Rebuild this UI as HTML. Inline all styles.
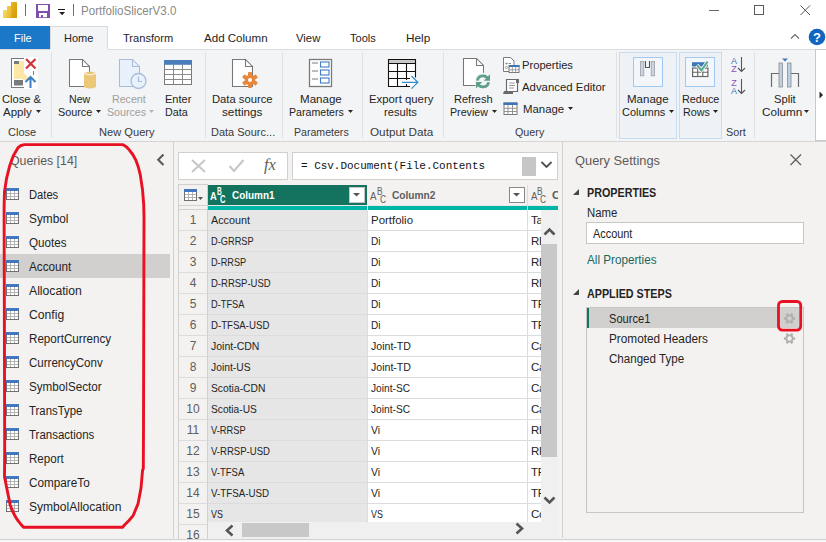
<!DOCTYPE html><html><head><meta charset="utf-8"><style>html,body{margin:0;padding:0;width:826px;height:542px;overflow:hidden;position:relative;background:#fff;}body{font-family:'Liberation Sans', sans-serif;}</style></head><body><div style="position:absolute;left:0px;top:0px;width:826px;height:49px;box-sizing:border-box;background:#ffffff;"></div>
<svg style="position:absolute;left:2px;top:1px;" width="18" height="19" viewBox="0 0 18 19"><defs><linearGradient id="lg1" x1="0" y1="0" x2="1" y2="1"><stop offset="0" stop-color="#f6dc6a"/><stop offset="1" stop-color="#ecc53c"/></linearGradient><linearGradient id="lg2" x1="0" y1="0" x2="1" y2="1"><stop offset="0" stop-color="#f2cf48"/><stop offset="1" stop-color="#e4b324"/></linearGradient><linearGradient id="lg3" x1="0" y1="0" x2="1" y2="1"><stop offset="0" stop-color="#e8b51c"/><stop offset="1" stop-color="#d4960a"/></linearGradient></defs><rect x="1" y="9" width="6" height="8" rx="0.6" fill="url(#lg1)"/><rect x="5" y="5" width="6" height="12" rx="0.6" fill="url(#lg2)"/><rect x="9" y="1" width="6" height="16" rx="0.6" fill="url(#lg3)"/></svg>
<div style="position:absolute;left:25px;top:4px;width:1px;height:12px;box-sizing:border-box;background:#6e6e6e;"></div>
<svg style="position:absolute;left:35px;top:3px;" width="16" height="16" viewBox="0 0 16 16"><rect x="1" y="1" width="14" height="14" fill="#7f4fae"/><path d="M3 2 H13 V7.2 Q13 8 12.2 8 H3.8 Q3 8 3 7.2 Z" fill="#ffffff"/><rect x="4" y="10" width="8" height="4.2" fill="#ffffff"/><rect x="6" y="12" width="2" height="2.2" fill="#7f4fae"/></svg>
<svg style="position:absolute;left:57px;top:7px;" width="10" height="10" viewBox="0 0 10 10"><rect x="1" y="2" width="7" height="1" fill="#1b1b1b"/><path d="M2.2 5 H8 L5.1 8.2 Z" fill="#1b1b1b"/></svg>
<div style="position:absolute;left:73px;top:4px;width:1px;height:12px;box-sizing:border-box;background:#6e6e6e;"></div>
<div style="position:absolute;top:4.04px;font-size:12px;line-height:15px;color:#8a8886;font-weight:400;white-space:nowrap;font-family:'Liberation Sans', sans-serif;left:81.10px;transform:scaleX(0.9663);transform-origin:0 50%;">PortfolioSlicerV3.0</div>
<div style="position:absolute;left:709px;top:10px;width:10px;height:1px;box-sizing:border-box;background:#6a6a6a;"></div>
<div style="position:absolute;left:754px;top:5px;width:10px;height:10px;box-sizing:border-box;border:1px solid #5a5a5a;"></div>
<svg style="position:absolute;left:799px;top:4px;" width="13" height="13" viewBox="0 0 13 13"><path d="M1.5 1.5 L11 11 M11 1.5 L1.5 11" stroke="#555" stroke-width="1"/></svg>
<div style="position:absolute;left:0px;top:26px;width:50px;height:23px;box-sizing:border-box;background:#1b77c8;"></div>
<div style="position:absolute;top:31.02px;font-size:11.5px;line-height:14px;color:#ffffff;font-weight:400;white-space:nowrap;font-family:'Liberation Sans', sans-serif;left:13.60px;transform:scaleX(0.9540);transform-origin:0 50%;">File</div>
<div style="position:absolute;left:50px;top:26px;width:58px;height:24px;box-sizing:border-box;background:#f3f4f6;border:1px solid #dadbdc;border-bottom:none;"></div>
<div style="position:absolute;top:31.02px;font-size:11.5px;line-height:14px;color:#252423;font-weight:400;white-space:nowrap;font-family:'Liberation Sans', sans-serif;left:64.20px;transform:scaleX(0.9577);transform-origin:0 50%;">Home</div>
<div style="position:absolute;top:31.02px;font-size:11.5px;line-height:14px;color:#252423;font-weight:400;white-space:nowrap;font-family:'Liberation Sans', sans-serif;left:122.90px;transform:scaleX(0.9652);transform-origin:0 50%;">Transform</div>
<div style="position:absolute;top:31.02px;font-size:11.5px;line-height:14px;color:#252423;font-weight:400;white-space:nowrap;font-family:'Liberation Sans', sans-serif;left:203.50px;transform:scaleX(1.0050);transform-origin:0 50%;">Add Column</div>
<div style="position:absolute;top:31.02px;font-size:11.5px;line-height:14px;color:#252423;font-weight:400;white-space:nowrap;font-family:'Liberation Sans', sans-serif;left:296.00px;transform:scaleX(0.9837);transform-origin:0 50%;">View</div>
<div style="position:absolute;top:31.02px;font-size:11.5px;line-height:14px;color:#252423;font-weight:400;white-space:nowrap;font-family:'Liberation Sans', sans-serif;left:350.00px;transform:scaleX(0.9595);transform-origin:0 50%;">Tools</div>
<div style="position:absolute;top:31.02px;font-size:11.5px;line-height:14px;color:#252423;font-weight:400;white-space:nowrap;font-family:'Liberation Sans', sans-serif;left:406.20px;transform:scaleX(1.0234);transform-origin:0 50%;">Help</div>
<svg style="position:absolute;left:790px;top:32px;" width="11" height="8" viewBox="0 0 11 8"><path d="M1 6.5 L5 2.5 L9 6.5" fill="none" stroke="#6b6b6b" stroke-width="1.2"/></svg>
<svg style="position:absolute;left:808px;top:28px;" width="18" height="18" viewBox="0 0 18 18"><circle cx="9" cy="9" r="8.3" fill="#1065c0"/><text x="9" y="13.6" font-family="Liberation Sans" font-weight="700" font-size="13" fill="#fff" text-anchor="middle">?</text></svg>
<div style="position:absolute;left:0px;top:49px;width:826px;height:93px;box-sizing:border-box;background:#f3f4f6;"></div>
<div style="position:absolute;left:0px;top:49px;width:50px;height:1px;box-sizing:border-box;background:#dadbdc;"></div>
<div style="position:absolute;left:108px;top:49px;width:718px;height:1px;box-sizing:border-box;background:#dadbdc;"></div>
<div style="position:absolute;left:0px;top:141px;width:826px;height:1px;box-sizing:border-box;background:#d6d6d6;"></div>
<div style="position:absolute;left:51px;top:52px;width:1px;height:86px;box-sizing:border-box;background:#e1e1e1;"></div>
<div style="position:absolute;left:205px;top:52px;width:1px;height:86px;box-sizing:border-box;background:#e1e1e1;"></div>
<div style="position:absolute;left:282px;top:52px;width:1px;height:86px;box-sizing:border-box;background:#e1e1e1;"></div>
<div style="position:absolute;left:362px;top:52px;width:1px;height:86px;box-sizing:border-box;background:#e1e1e1;"></div>
<div style="position:absolute;left:443px;top:52px;width:1px;height:86px;box-sizing:border-box;background:#e1e1e1;"></div>
<div style="position:absolute;left:616px;top:52px;width:1px;height:86px;box-sizing:border-box;background:#e1e1e1;"></div>
<div style="position:absolute;left:754px;top:52px;width:1px;height:86px;box-sizing:border-box;background:#e1e1e1;"></div>
<div style="position:absolute;left:815px;top:49px;width:11px;height:92px;box-sizing:border-box;background:#ffffff;border:1px solid #c9c9c9;border-right:none;"></div>
<svg style="position:absolute;left:819px;top:91px;" width="5" height="8" viewBox="0 0 5 8"><path d="M0.5 0.5 L4 4 L0.5 7.5 Z" fill="#252423"/></svg>
<svg style="position:absolute;left:10px;top:57px;" width="28" height="32" viewBox="0 0 28 32"><rect x="1.5" y="1.5" width="21" height="29" fill="#ffffff" stroke="#7a7a7a" stroke-width="1"/><rect x="14" y="0" width="14" height="32" fill="#ffffff"/><path d="M4 4 H14 V16 L21 23 H13 V22 H4 Z" fill="#fde7a6"/><rect x="4" y="4" width="5" height="3" fill="#7a7a7a"/><rect x="4" y="23" width="9" height="5.5" fill="#7a7a7a"/><path d="M16 2 L25.5 11.5 M25.5 2 L16 11.5" stroke="#d13438" stroke-width="2.2"/><path d="M20.5 31 V20 M15.5 25 L20.5 20 L25.5 25" fill="none" stroke="#3d7fc0" stroke-width="2"/><rect x="23" y="14" width="1" height="4" fill="#7a7a7a"/></svg>
<div style="position:absolute;top:92.02px;font-size:11.5px;line-height:14px;color:#252423;font-weight:400;white-space:nowrap;font-family:'Liberation Sans', sans-serif;left:2.30px;transform:scaleX(0.9681);transform-origin:0 50%;">Close &amp;</div>
<div style="position:absolute;top:105.02px;font-size:11.5px;line-height:14px;color:#252423;font-weight:400;white-space:nowrap;font-family:'Liberation Sans', sans-serif;left:2.90px;transform:scaleX(1.0029);transform-origin:0 50%;">Apply</div>
<svg style="position:absolute;left:35.5px;top:110.3px;" width="6" height="4" viewBox="0 0 6 4"><path d="M0 0 H5 L2.5 3 Z" fill="#252423"/></svg>
<div style="position:absolute;top:125.02px;font-size:11.5px;line-height:14px;color:#3b3a39;font-weight:400;white-space:nowrap;font-family:'Liberation Sans', sans-serif;left:8.10px;transform:scaleX(0.9584);transform-origin:0 50%;">Close</div>
<svg style="position:absolute;left:68px;top:58px;" width="30" height="32" viewBox="0 0 30 32"><path d="M1.5 1.5 H14.5 L21.5 8.5 V28.5 H1.5 Z" fill="#ffffff" stroke="#777" stroke-width="1.05"/><path d="M14.5 1.5 V8.5 H21.5" fill="none" stroke="#777" stroke-width="1.05"/><path d="M16 15 Q22 12 28 15 V29 Q22 32 16 29 Z" fill="#ecc778"/><path d="M16 15.5 Q22 18.5 28 15.5" fill="none" stroke="#ffffff" stroke-width="0.9"/></svg>
<div style="position:absolute;top:92.02px;font-size:11.5px;line-height:14px;color:#252423;font-weight:400;white-space:nowrap;font-family:'Liberation Sans', sans-serif;left:68.80px;transform:scaleX(0.9198);transform-origin:0 50%;">New</div>
<div style="position:absolute;top:105.02px;font-size:11.5px;line-height:14px;color:#252423;font-weight:400;white-space:nowrap;font-family:'Liberation Sans', sans-serif;left:58.30px;transform:scaleX(0.9406);transform-origin:0 50%;">Source</div>
<svg style="position:absolute;left:96.2px;top:110.3px;" width="6" height="4" viewBox="0 0 6 4"><path d="M0 0 H5 L2.5 3 Z" fill="#252423"/></svg>
<svg style="position:absolute;left:118px;top:58px;" width="30" height="32" viewBox="0 0 30 32"><path d="M1.5 1.5 H14.5 L21.5 8.5 V28.5 H1.5 Z" fill="#e9f1fc" stroke="#a9bcd9" stroke-width="1.05"/><path d="M14.5 1.5 V8.5 H21.5" fill="none" stroke="#a9bcd9" stroke-width="1.05"/><circle cx="20.5" cy="23" r="7.5" fill="#e9f1fc" stroke="#a9bcd9" stroke-width="1.3"/><path d="M20.5 18.5 V23.5 H24" fill="none" stroke="#a9bcd9" stroke-width="1.2"/></svg>
<div style="position:absolute;top:92.02px;font-size:11.5px;line-height:14px;color:#a19f9d;font-weight:400;white-space:nowrap;font-family:'Liberation Sans', sans-serif;left:112.30px;transform:scaleX(0.9264);transform-origin:0 50%;">Recent</div>
<div style="position:absolute;top:105.02px;font-size:11.5px;line-height:14px;color:#a19f9d;font-weight:400;white-space:nowrap;font-family:'Liberation Sans', sans-serif;left:106.50px;transform:scaleX(0.9237);transform-origin:0 50%;">Sources</div>
<svg style="position:absolute;left:149px;top:110.3px;" width="6" height="4" viewBox="0 0 6 4"><path d="M0 0 H5 L2.5 3 Z" fill="#b3b3b3"/></svg>
<svg style="position:absolute;left:163px;top:59px;" width="30" height="27" viewBox="0 0 30 27"><rect x="1.5" y="1.5" width="27" height="24" fill="#ffffff" stroke="#7a7a7a" stroke-width="1"/><rect x="1" y="1" width="28" height="4.8" fill="#4a7ebb"/><path d="M10.5 5.5 V25.5 M19.5 5.5 V25.5 M1.5 10.5 H28.5 M1.5 15.5 H28.5 M1.5 20.5 H28.5" stroke="#8a8a8a" stroke-width="1"/></svg>
<div style="position:absolute;top:92.02px;font-size:11.5px;line-height:14px;color:#252423;font-weight:400;white-space:nowrap;font-family:'Liberation Sans', sans-serif;left:164.60px;transform:scaleX(0.9582);transform-origin:0 50%;">Enter</div>
<div style="position:absolute;top:105.02px;font-size:11.5px;line-height:14px;color:#252423;font-weight:400;white-space:nowrap;font-family:'Liberation Sans', sans-serif;left:165.30px;transform:scaleX(0.9319);transform-origin:0 50%;">Data</div>
<div style="position:absolute;top:125.02px;font-size:11.5px;line-height:14px;color:#3b3a39;font-weight:400;white-space:nowrap;font-family:'Liberation Sans', sans-serif;left:99.20px;transform:scaleX(0.9660);transform-origin:0 50%;">New Query</div>
<svg style="position:absolute;left:231px;top:58px;" width="30" height="32" viewBox="0 0 30 32"><path d="M1.5 1.5 H14.5 L21.5 8.5 V28.5 H1.5 Z" fill="#ffffff" stroke="#777" stroke-width="1.05"/><path d="M14.5 1.5 V8.5 H21.5" fill="none" stroke="#777" stroke-width="1.05"/><g transform="translate(19,22)" fill="#e8873a"><circle r="5.2"/><rect x="-2" y="-8" width="4" height="4" rx="1" transform="rotate(0)"/><rect x="-2" y="-8" width="4" height="4" rx="1" transform="rotate(60)"/><rect x="-2" y="-8" width="4" height="4" rx="1" transform="rotate(120)"/><rect x="-2" y="-8" width="4" height="4" rx="1" transform="rotate(180)"/><rect x="-2" y="-8" width="4" height="4" rx="1" transform="rotate(240)"/><rect x="-2" y="-8" width="4" height="4" rx="1" transform="rotate(300)"/><circle r="2" fill="#ffffff"/></g></svg>
<div style="position:absolute;top:92.02px;font-size:11.5px;line-height:14px;color:#252423;font-weight:400;white-space:nowrap;font-family:'Liberation Sans', sans-serif;left:212.40px;transform:scaleX(0.9772);transform-origin:0 50%;">Data source</div>
<div style="position:absolute;top:105.02px;font-size:11.5px;line-height:14px;color:#252423;font-weight:400;white-space:nowrap;font-family:'Liberation Sans', sans-serif;left:222.30px;transform:scaleX(1.0205);transform-origin:0 50%;">settings</div>
<div style="position:absolute;top:125.02px;font-size:11.5px;line-height:14px;color:#3b3a39;font-weight:400;white-space:nowrap;font-family:'Liberation Sans', sans-serif;left:210.50px;transform:scaleX(0.9564);transform-origin:0 50%;">Data Sourc...</div>
<svg style="position:absolute;left:308px;top:58px;" width="26" height="30" viewBox="0 0 26 30"><rect x="1.5" y="1.5" width="22" height="27" fill="#ffffff" stroke="#7a7a7a" stroke-width="1.3"/><path d="M4 5 H10 M4 13 H10 M4 21 H10" stroke="#7a7a7a" stroke-width="1"/><rect x="12.5" y="4" width="8.5" height="5" fill="none" stroke="#3e7cc0" stroke-width="1.1"/><rect x="12.5" y="12" width="8.5" height="5" fill="none" stroke="#3e7cc0" stroke-width="1.1"/><rect x="12.5" y="20" width="8.5" height="5" fill="none" stroke="#3e7cc0" stroke-width="1.1"/></svg>
<div style="position:absolute;top:92.02px;font-size:11.5px;line-height:14px;color:#252423;font-weight:400;white-space:nowrap;font-family:'Liberation Sans', sans-serif;left:300.20px;transform:scaleX(1.0058);transform-origin:0 50%;">Manage</div>
<div style="position:absolute;top:105.02px;font-size:11.5px;line-height:14px;color:#252423;font-weight:400;white-space:nowrap;font-family:'Liberation Sans', sans-serif;left:289.40px;transform:scaleX(0.9231);transform-origin:0 50%;">Parameters</div>
<svg style="position:absolute;left:347.9px;top:110.3px;" width="6" height="4" viewBox="0 0 6 4"><path d="M0 0 H5 L2.5 3 Z" fill="#252423"/></svg>
<div style="position:absolute;top:125.02px;font-size:11.5px;line-height:14px;color:#3b3a39;font-weight:400;white-space:nowrap;font-family:'Liberation Sans', sans-serif;left:293.50px;transform:scaleX(0.9198);transform-origin:0 50%;">Parameters</div>
<svg style="position:absolute;left:387px;top:58px;" width="34" height="32" viewBox="0 0 34 32"><rect x="1.5" y="1.5" width="27" height="27" fill="#ffffff"/><rect x="2" y="2" width="26" height="3" fill="#c8c8c8"/><path d="M1.5 1 V28.5 M1 1.5 H29 M28.5 1 V19.5 M1 5.5 H29 M1 13.5 H29 M1 20.5 H23 M1 28.5 H23 M10.5 5 V29 M19.5 5 V22 M19.5 26 V29" fill="none" stroke="#111" stroke-width="1.1"/><path d="M15 24.3 H30.5 M24.5 18 L30.8 24.3 L24.5 30.6" fill="none" stroke="#2e8bd0" stroke-width="1.2"/></svg>
<div style="position:absolute;top:92.02px;font-size:11.5px;line-height:14px;color:#252423;font-weight:400;white-space:nowrap;font-family:'Liberation Sans', sans-serif;left:369.30px;transform:scaleX(0.9870);transform-origin:0 50%;">Export query</div>
<div style="position:absolute;top:105.02px;font-size:11.5px;line-height:14px;color:#252423;font-weight:400;white-space:nowrap;font-family:'Liberation Sans', sans-serif;left:384.40px;transform:scaleX(0.9701);transform-origin:0 50%;">results</div>
<div style="position:absolute;top:125.02px;font-size:11.5px;line-height:14px;color:#3b3a39;font-weight:400;white-space:nowrap;font-family:'Liberation Sans', sans-serif;left:369.60px;transform:scaleX(1.0190);transform-origin:0 50%;">Output Data</div>
<svg style="position:absolute;left:462px;top:57px;" width="30" height="32" viewBox="0 0 30 32"><path d="M1.5 1.5 H14.5 L21.5 8.5 V28.5 H1.5 Z" fill="#ffffff" stroke="#777" stroke-width="1.05"/><path d="M14.5 1.5 V8.5 H21.5" fill="none" stroke="#777" stroke-width="1.05"/><circle cx="21" cy="24.4" r="8.6" fill="#f3f4f6"/><path d="M12.7 15.5 V28.5 H12.7" stroke="none"/><path d="M15.4 23.6 A5.6 5.6 0 0 1 26.2 22.6" fill="none" stroke="#5d9e88" stroke-width="2.7"/><path d="M26.6 25.2 A5.6 5.6 0 0 1 15.8 26.2" fill="none" stroke="#5d9e88" stroke-width="2.7"/><path d="M28 17.3 V23.8 H21.8 Z" fill="#5d9e88"/><path d="M14 31.5 V25 H20.2 Z" fill="#5d9e88"/></svg>
<div style="position:absolute;top:92.02px;font-size:11.5px;line-height:14px;color:#252423;font-weight:400;white-space:nowrap;font-family:'Liberation Sans', sans-serif;left:454.40px;transform:scaleX(0.9581);transform-origin:0 50%;">Refresh</div>
<div style="position:absolute;top:105.02px;font-size:11.5px;line-height:14px;color:#252423;font-weight:400;white-space:nowrap;font-family:'Liberation Sans', sans-serif;left:450.20px;transform:scaleX(0.9280);transform-origin:0 50%;">Preview</div>
<svg style="position:absolute;left:492px;top:110.3px;" width="6" height="4" viewBox="0 0 6 4"><path d="M0 0 H5 L2.5 3 Z" fill="#252423"/></svg>
<svg style="position:absolute;left:502px;top:56px;" width="18" height="18" viewBox="0 0 18 18"><path d="M1.5 1.5 H8.5 L12 5 V15.5 H1.5 Z" fill="#ffffff" stroke="#7a7a7a" stroke-width="1"/><circle cx="4.5" cy="7.5" r="1.1" fill="#8a8a8a"/><circle cx="4.5" cy="11.5" r="1.1" fill="none" stroke="#8a8a8a" stroke-width="0.8"/><path d="M6.5 7.5 H9" stroke="#8a8a8a" stroke-width="1"/><rect x="7" y="9.5" width="10" height="7" fill="#ffffff" stroke="#7a7a7a" stroke-width="1"/><rect x="7" y="9" width="10.5" height="2" fill="#3e74b8"/><path d="M10.3 11 V16.5 M13.6 11 V16.5 M7 13.8 H17" stroke="#8a8a8a" stroke-width="0.8"/></svg>
<div style="position:absolute;top:58.02px;font-size:11.5px;line-height:14px;color:#252423;font-weight:400;white-space:nowrap;font-family:'Liberation Sans', sans-serif;left:522.30px;transform:scaleX(0.9722);transform-origin:0 50%;">Properties</div>
<svg style="position:absolute;left:502px;top:78px;" width="18" height="17" viewBox="0 0 18 17"><path d="M4.5 1.5 H15.5 V13.5 H4.5 Z" fill="#ffffff" stroke="#6a6a6a" stroke-width="1.2"/><rect x="14" y="1" width="3" height="4" fill="#6a6a6a"/><path d="M7 5 H13 M7 7.5 H13 M7 10 H12" stroke="#8a8a8a" stroke-width="0.9"/><path d="M1 16 L2 13 H11 V16 Z" fill="#6a6a6a"/></svg>
<div style="position:absolute;top:80.02px;font-size:11.5px;line-height:14px;color:#252423;font-weight:400;white-space:nowrap;font-family:'Liberation Sans', sans-serif;left:522.30px;transform:scaleX(0.9899);transform-origin:0 50%;">Advanced Editor</div>
<svg style="position:absolute;left:503px;top:102px;" width="15" height="13" viewBox="0 0 15 13"><rect x="1" y="1" width="13" height="11.5" fill="#ffffff" stroke="#7a7a7a" stroke-width="1"/><rect x="0.5" y="0.5" width="14" height="2.5" fill="#3e74b8"/><path d="M5 3 V12.5 M9.5 3 V12.5 M1 6.3 H14 M1 9.5 H14" stroke="#8a8a8a" stroke-width="0.9"/></svg>
<div style="position:absolute;top:102.02px;font-size:11.5px;line-height:14px;color:#252423;font-weight:400;white-space:nowrap;font-family:'Liberation Sans', sans-serif;left:522.50px;transform:scaleX(0.9912);transform-origin:0 50%;">Manage</div>
<svg style="position:absolute;left:568.2px;top:106.7px;" width="6" height="4" viewBox="0 0 6 4"><path d="M0 0 H5 L2.5 3 Z" fill="#252423"/></svg>
<div style="position:absolute;top:125.02px;font-size:11.5px;line-height:14px;color:#3b3a39;font-weight:400;white-space:nowrap;font-family:'Liberation Sans', sans-serif;left:514.50px;transform:scaleX(0.9345);transform-origin:0 50%;">Query</div>
<div style="position:absolute;left:619px;top:52px;width:58px;height:87px;box-sizing:border-box;background:#eef2f7;border:1px solid #c7dcf3;"></div>
<div style="position:absolute;left:633px;top:57px;width:30px;height:30px;box-sizing:border-box;background:#f3f6fa;border:1px solid #9fc8f2;"></div>
<svg style="position:absolute;left:636px;top:58px;" width="24" height="24" viewBox="0 0 24 24"><rect x="4.4" y="3.4" width="3.4" height="14.4" fill="#c5d5e6" stroke="#a0a0a0" stroke-width="0.8"/><rect x="15.2" y="3.4" width="3.4" height="14.4" fill="#c5d5e6" stroke="#a0a0a0" stroke-width="0.8"/><path d="M9.5 3 V9.5 H13.5 V3" fill="none" stroke="#555" stroke-width="1.1"/></svg>
<div style="position:absolute;top:92.02px;font-size:11.5px;line-height:14px;color:#252423;font-weight:400;white-space:nowrap;font-family:'Liberation Sans', sans-serif;left:626.60px;transform:scaleX(1.0009);transform-origin:0 50%;">Manage</div>
<div style="position:absolute;top:105.02px;font-size:11.5px;line-height:14px;color:#252423;font-weight:400;white-space:nowrap;font-family:'Liberation Sans', sans-serif;left:621.80px;transform:scaleX(0.9556);transform-origin:0 50%;">Columns</div>
<svg style="position:absolute;left:668.9px;top:110.3px;" width="6" height="4" viewBox="0 0 6 4"><path d="M0 0 H5 L2.5 3 Z" fill="#252423"/></svg>
<div style="position:absolute;left:679px;top:52px;width:43px;height:87px;box-sizing:border-box;background:#eef2f7;border:1px solid #c7dcf3;"></div>
<div style="position:absolute;left:685px;top:57px;width:30px;height:30px;box-sizing:border-box;background:#f3f6fa;border:1px solid #9fc8f2;"></div>
<svg style="position:absolute;left:688px;top:58px;" width="24" height="22" viewBox="0 0 24 22"><rect x="4" y="4.2" width="16" height="4.3" fill="#3e74b8"/><rect x="4.6" y="10.1" width="15.3" height="8.4" fill="#fff" stroke="#666" stroke-width="1.2"/><path d="M9.7 10 V18.5 M14.8 10 V18.5 M4.5 14.3 H20" stroke="#666" stroke-width="1.1"/><path d="M9 7 L13.4 12.3 L19.6 3.6" fill="none" stroke="#f3f6fa" stroke-width="3.6"/><path d="M9 7 L13.4 12.3 L19.6 3.6" fill="none" stroke="#5aa88f" stroke-width="2"/></svg>
<div style="position:absolute;top:92.02px;font-size:11.5px;line-height:14px;color:#252423;font-weight:400;white-space:nowrap;font-family:'Liberation Sans', sans-serif;left:681.60px;transform:scaleX(0.9429);transform-origin:0 50%;">Reduce</div>
<div style="position:absolute;top:105.02px;font-size:11.5px;line-height:14px;color:#252423;font-weight:400;white-space:nowrap;font-family:'Liberation Sans', sans-serif;left:682.80px;transform:scaleX(0.9343);transform-origin:0 50%;">Rows</div>
<svg style="position:absolute;left:713px;top:110.3px;" width="6" height="4" viewBox="0 0 6 4"><path d="M0 0 H5 L2.5 3 Z" fill="#252423"/></svg>
<svg style="position:absolute;left:729px;top:56px;" width="18" height="40" viewBox="0 0 18 40"><text x="5" y="8" font-family="Liberation Sans" font-size="9" fill="#3e74b8" text-anchor="middle">A</text><text x="5" y="15.5" font-family="Liberation Sans" font-size="9" fill="#8a4fb5" text-anchor="middle">Z</text><text x="5" y="30" font-family="Liberation Sans" font-size="9" fill="#8a4fb5" text-anchor="middle">Z</text><text x="5" y="38" font-family="Liberation Sans" font-size="9" fill="#3e74b8" text-anchor="middle">A</text><path d="M12.5 1 V15.5 M9 12 L12.5 15.5 L16 12 M12.5 23 V37.5 M9 34 L12.5 37.5 L16 34" fill="none" stroke="#555" stroke-width="1.1"/></svg>
<div style="position:absolute;top:125.02px;font-size:11.5px;line-height:14px;color:#3b3a39;font-weight:400;white-space:nowrap;font-family:'Liberation Sans', sans-serif;left:726.40px;transform:scaleX(0.9408);transform-origin:0 50%;">Sort</div>
<svg style="position:absolute;left:770px;top:58px;" width="30" height="30" viewBox="0 0 30 30"><path d="M1.5 29 V15.5 H9 M21 15.5 H28.5 V29" fill="none" stroke="#6a6a6a" stroke-width="1.2"/><rect x="9" y="5" width="3.5" height="24" fill="#bcd0e6" stroke="#8a8a8a" stroke-width="0.8"/><rect x="17.5" y="5" width="3.5" height="24" fill="#bcd0e6" stroke="#8a8a8a" stroke-width="0.8"/><path d="M12 0.5 H18 L15 3.5 Z" fill="#3e74b8"/></svg>
<div style="position:absolute;top:92.02px;font-size:11.5px;line-height:14px;color:#252423;font-weight:400;white-space:nowrap;font-family:'Liberation Sans', sans-serif;left:773.60px;transform:scaleX(0.9708);transform-origin:0 50%;">Split</div>
<div style="position:absolute;top:105.02px;font-size:11.5px;line-height:14px;color:#252423;font-weight:400;white-space:nowrap;font-family:'Liberation Sans', sans-serif;left:761.50px;transform:scaleX(1.0171);transform-origin:0 50%;">Column</div>
<svg style="position:absolute;left:804px;top:110.3px;" width="6" height="4" viewBox="0 0 6 4"><path d="M0 0 H5 L2.5 3 Z" fill="#252423"/></svg>
<div style="position:absolute;left:0px;top:142px;width:826px;height:400px;box-sizing:border-box;background:#f3f2f1;"></div>
<div style="position:absolute;left:0px;top:539px;width:826px;height:1px;box-sizing:border-box;background:#d2d0ce;"></div>
<div style="position:absolute;left:0px;top:540px;width:826px;height:2px;box-sizing:border-box;background:#f8f8f8;"></div>
<div style="position:absolute;top:151.82px;font-size:13.5px;line-height:17px;color:#5c5a58;font-weight:400;white-space:nowrap;font-family:'Liberation Sans', sans-serif;left:10.30px;transform:scaleX(0.9136);transform-origin:0 50%;">Queries [14]</div>
<svg style="position:absolute;left:155px;top:153px;" width="10" height="13" viewBox="0 0 10 13"><path d="M8.5 1.5 L3.2 6.8 L8.5 12" fill="none" stroke="#5a5a5a" stroke-width="2.1"/></svg>
<div style="position:absolute;left:0px;top:254px;width:170px;height:24px;box-sizing:border-box;background:#d2d0ce;"></div>
<svg style="position:absolute;left:6px;top:188px;" width="13" height="12" viewBox="0 0 13 12"><g shape-rendering="crispEdges"><rect x="0" y="0" width="13" height="12" fill="#707070"/><rect x="0" y="0" width="13" height="3" fill="#4277bd"/><rect x="1" y="3" width="11" height="8" fill="#b4b4b4"/><rect x="1" y="3" width="3" height="2" fill="#ffffff"/><rect x="1" y="6" width="3" height="2" fill="#ffffff"/><rect x="1" y="9" width="3" height="2" fill="#ffffff"/><rect x="5" y="3" width="3" height="2" fill="#ffffff"/><rect x="5" y="6" width="3" height="2" fill="#ffffff"/><rect x="5" y="9" width="3" height="2" fill="#ffffff"/><rect x="9" y="3" width="3" height="2" fill="#ffffff"/><rect x="9" y="6" width="3" height="2" fill="#ffffff"/><rect x="9" y="9" width="3" height="2" fill="#ffffff"/></g></svg>
<div style="position:absolute;top:188.34px;font-size:12px;line-height:15px;color:#252423;font-weight:400;white-space:nowrap;font-family:'Liberation Sans', sans-serif;left:29.40px;transform:scaleX(0.9315);transform-origin:0 50%;">Dates</div>
<svg style="position:absolute;left:6px;top:212px;" width="13" height="12" viewBox="0 0 13 12"><g shape-rendering="crispEdges"><rect x="0" y="0" width="13" height="12" fill="#707070"/><rect x="0" y="0" width="13" height="3" fill="#4277bd"/><rect x="1" y="3" width="11" height="8" fill="#b4b4b4"/><rect x="1" y="3" width="3" height="2" fill="#ffffff"/><rect x="1" y="6" width="3" height="2" fill="#ffffff"/><rect x="1" y="9" width="3" height="2" fill="#ffffff"/><rect x="5" y="3" width="3" height="2" fill="#ffffff"/><rect x="5" y="6" width="3" height="2" fill="#ffffff"/><rect x="5" y="9" width="3" height="2" fill="#ffffff"/><rect x="9" y="3" width="3" height="2" fill="#ffffff"/><rect x="9" y="6" width="3" height="2" fill="#ffffff"/><rect x="9" y="9" width="3" height="2" fill="#ffffff"/></g></svg>
<div style="position:absolute;top:212.34px;font-size:12px;line-height:15px;color:#252423;font-weight:400;white-space:nowrap;font-family:'Liberation Sans', sans-serif;left:29.40px;transform:scaleX(0.9861);transform-origin:0 50%;">Symbol</div>
<svg style="position:absolute;left:6px;top:236px;" width="13" height="12" viewBox="0 0 13 12"><g shape-rendering="crispEdges"><rect x="0" y="0" width="13" height="12" fill="#707070"/><rect x="0" y="0" width="13" height="3" fill="#4277bd"/><rect x="1" y="3" width="11" height="8" fill="#b4b4b4"/><rect x="1" y="3" width="3" height="2" fill="#ffffff"/><rect x="1" y="6" width="3" height="2" fill="#ffffff"/><rect x="1" y="9" width="3" height="2" fill="#ffffff"/><rect x="5" y="3" width="3" height="2" fill="#ffffff"/><rect x="5" y="6" width="3" height="2" fill="#ffffff"/><rect x="5" y="9" width="3" height="2" fill="#ffffff"/><rect x="9" y="3" width="3" height="2" fill="#ffffff"/><rect x="9" y="6" width="3" height="2" fill="#ffffff"/><rect x="9" y="9" width="3" height="2" fill="#ffffff"/></g></svg>
<div style="position:absolute;top:236.34px;font-size:12px;line-height:15px;color:#252423;font-weight:400;white-space:nowrap;font-family:'Liberation Sans', sans-serif;left:29.40px;transform:scaleX(0.9693);transform-origin:0 50%;">Quotes</div>
<svg style="position:absolute;left:6px;top:260px;" width="13" height="12" viewBox="0 0 13 12"><g shape-rendering="crispEdges"><rect x="0" y="0" width="13" height="12" fill="#707070"/><rect x="0" y="0" width="13" height="3" fill="#4277bd"/><rect x="1" y="3" width="11" height="8" fill="#b4b4b4"/><rect x="1" y="3" width="3" height="2" fill="#ffffff"/><rect x="1" y="6" width="3" height="2" fill="#ffffff"/><rect x="1" y="9" width="3" height="2" fill="#ffffff"/><rect x="5" y="3" width="3" height="2" fill="#ffffff"/><rect x="5" y="6" width="3" height="2" fill="#ffffff"/><rect x="5" y="9" width="3" height="2" fill="#ffffff"/><rect x="9" y="3" width="3" height="2" fill="#ffffff"/><rect x="9" y="6" width="3" height="2" fill="#ffffff"/><rect x="9" y="9" width="3" height="2" fill="#ffffff"/></g></svg>
<div style="position:absolute;top:260.34px;font-size:12px;line-height:15px;color:#252423;font-weight:400;white-space:nowrap;font-family:'Liberation Sans', sans-serif;left:29.40px;transform:scaleX(0.9767);transform-origin:0 50%;">Account</div>
<svg style="position:absolute;left:6px;top:284px;" width="13" height="12" viewBox="0 0 13 12"><g shape-rendering="crispEdges"><rect x="0" y="0" width="13" height="12" fill="#707070"/><rect x="0" y="0" width="13" height="3" fill="#4277bd"/><rect x="1" y="3" width="11" height="8" fill="#b4b4b4"/><rect x="1" y="3" width="3" height="2" fill="#ffffff"/><rect x="1" y="6" width="3" height="2" fill="#ffffff"/><rect x="1" y="9" width="3" height="2" fill="#ffffff"/><rect x="5" y="3" width="3" height="2" fill="#ffffff"/><rect x="5" y="6" width="3" height="2" fill="#ffffff"/><rect x="5" y="9" width="3" height="2" fill="#ffffff"/><rect x="9" y="3" width="3" height="2" fill="#ffffff"/><rect x="9" y="6" width="3" height="2" fill="#ffffff"/><rect x="9" y="9" width="3" height="2" fill="#ffffff"/></g></svg>
<div style="position:absolute;top:284.34px;font-size:12px;line-height:15px;color:#252423;font-weight:400;white-space:nowrap;font-family:'Liberation Sans', sans-serif;left:29.40px;transform:scaleX(1.0164);transform-origin:0 50%;">Allocation</div>
<svg style="position:absolute;left:6px;top:308px;" width="13" height="12" viewBox="0 0 13 12"><g shape-rendering="crispEdges"><rect x="0" y="0" width="13" height="12" fill="#707070"/><rect x="0" y="0" width="13" height="3" fill="#4277bd"/><rect x="1" y="3" width="11" height="8" fill="#b4b4b4"/><rect x="1" y="3" width="3" height="2" fill="#ffffff"/><rect x="1" y="6" width="3" height="2" fill="#ffffff"/><rect x="1" y="9" width="3" height="2" fill="#ffffff"/><rect x="5" y="3" width="3" height="2" fill="#ffffff"/><rect x="5" y="6" width="3" height="2" fill="#ffffff"/><rect x="5" y="9" width="3" height="2" fill="#ffffff"/><rect x="9" y="3" width="3" height="2" fill="#ffffff"/><rect x="9" y="6" width="3" height="2" fill="#ffffff"/><rect x="9" y="9" width="3" height="2" fill="#ffffff"/></g></svg>
<div style="position:absolute;top:308.34px;font-size:12px;line-height:15px;color:#252423;font-weight:400;white-space:nowrap;font-family:'Liberation Sans', sans-serif;left:29.40px;transform:scaleX(1.0143);transform-origin:0 50%;">Config</div>
<svg style="position:absolute;left:6px;top:332px;" width="13" height="12" viewBox="0 0 13 12"><g shape-rendering="crispEdges"><rect x="0" y="0" width="13" height="12" fill="#707070"/><rect x="0" y="0" width="13" height="3" fill="#4277bd"/><rect x="1" y="3" width="11" height="8" fill="#b4b4b4"/><rect x="1" y="3" width="3" height="2" fill="#ffffff"/><rect x="1" y="6" width="3" height="2" fill="#ffffff"/><rect x="1" y="9" width="3" height="2" fill="#ffffff"/><rect x="5" y="3" width="3" height="2" fill="#ffffff"/><rect x="5" y="6" width="3" height="2" fill="#ffffff"/><rect x="5" y="9" width="3" height="2" fill="#ffffff"/><rect x="9" y="3" width="3" height="2" fill="#ffffff"/><rect x="9" y="6" width="3" height="2" fill="#ffffff"/><rect x="9" y="9" width="3" height="2" fill="#ffffff"/></g></svg>
<div style="position:absolute;top:332.34px;font-size:12px;line-height:15px;color:#252423;font-weight:400;white-space:nowrap;font-family:'Liberation Sans', sans-serif;left:29.40px;transform:scaleX(0.9693);transform-origin:0 50%;">ReportCurrency</div>
<svg style="position:absolute;left:6px;top:356px;" width="13" height="12" viewBox="0 0 13 12"><g shape-rendering="crispEdges"><rect x="0" y="0" width="13" height="12" fill="#707070"/><rect x="0" y="0" width="13" height="3" fill="#4277bd"/><rect x="1" y="3" width="11" height="8" fill="#b4b4b4"/><rect x="1" y="3" width="3" height="2" fill="#ffffff"/><rect x="1" y="6" width="3" height="2" fill="#ffffff"/><rect x="1" y="9" width="3" height="2" fill="#ffffff"/><rect x="5" y="3" width="3" height="2" fill="#ffffff"/><rect x="5" y="6" width="3" height="2" fill="#ffffff"/><rect x="5" y="9" width="3" height="2" fill="#ffffff"/><rect x="9" y="3" width="3" height="2" fill="#ffffff"/><rect x="9" y="6" width="3" height="2" fill="#ffffff"/><rect x="9" y="9" width="3" height="2" fill="#ffffff"/></g></svg>
<div style="position:absolute;top:356.34px;font-size:12px;line-height:15px;color:#252423;font-weight:400;white-space:nowrap;font-family:'Liberation Sans', sans-serif;left:29.40px;transform:scaleX(0.9610);transform-origin:0 50%;">CurrencyConv</div>
<svg style="position:absolute;left:6px;top:380px;" width="13" height="12" viewBox="0 0 13 12"><g shape-rendering="crispEdges"><rect x="0" y="0" width="13" height="12" fill="#707070"/><rect x="0" y="0" width="13" height="3" fill="#4277bd"/><rect x="1" y="3" width="11" height="8" fill="#b4b4b4"/><rect x="1" y="3" width="3" height="2" fill="#ffffff"/><rect x="1" y="6" width="3" height="2" fill="#ffffff"/><rect x="1" y="9" width="3" height="2" fill="#ffffff"/><rect x="5" y="3" width="3" height="2" fill="#ffffff"/><rect x="5" y="6" width="3" height="2" fill="#ffffff"/><rect x="5" y="9" width="3" height="2" fill="#ffffff"/><rect x="9" y="3" width="3" height="2" fill="#ffffff"/><rect x="9" y="6" width="3" height="2" fill="#ffffff"/><rect x="9" y="9" width="3" height="2" fill="#ffffff"/></g></svg>
<div style="position:absolute;top:380.34px;font-size:12px;line-height:15px;color:#252423;font-weight:400;white-space:nowrap;font-family:'Liberation Sans', sans-serif;left:29.40px;transform:scaleX(0.9719);transform-origin:0 50%;">SymbolSector</div>
<svg style="position:absolute;left:6px;top:404px;" width="13" height="12" viewBox="0 0 13 12"><g shape-rendering="crispEdges"><rect x="0" y="0" width="13" height="12" fill="#707070"/><rect x="0" y="0" width="13" height="3" fill="#4277bd"/><rect x="1" y="3" width="11" height="8" fill="#b4b4b4"/><rect x="1" y="3" width="3" height="2" fill="#ffffff"/><rect x="1" y="6" width="3" height="2" fill="#ffffff"/><rect x="1" y="9" width="3" height="2" fill="#ffffff"/><rect x="5" y="3" width="3" height="2" fill="#ffffff"/><rect x="5" y="6" width="3" height="2" fill="#ffffff"/><rect x="5" y="9" width="3" height="2" fill="#ffffff"/><rect x="9" y="3" width="3" height="2" fill="#ffffff"/><rect x="9" y="6" width="3" height="2" fill="#ffffff"/><rect x="9" y="9" width="3" height="2" fill="#ffffff"/></g></svg>
<div style="position:absolute;top:404.34px;font-size:12px;line-height:15px;color:#252423;font-weight:400;white-space:nowrap;font-family:'Liberation Sans', sans-serif;left:29.40px;transform:scaleX(0.9475);transform-origin:0 50%;">TransType</div>
<svg style="position:absolute;left:6px;top:428px;" width="13" height="12" viewBox="0 0 13 12"><g shape-rendering="crispEdges"><rect x="0" y="0" width="13" height="12" fill="#707070"/><rect x="0" y="0" width="13" height="3" fill="#4277bd"/><rect x="1" y="3" width="11" height="8" fill="#b4b4b4"/><rect x="1" y="3" width="3" height="2" fill="#ffffff"/><rect x="1" y="6" width="3" height="2" fill="#ffffff"/><rect x="1" y="9" width="3" height="2" fill="#ffffff"/><rect x="5" y="3" width="3" height="2" fill="#ffffff"/><rect x="5" y="6" width="3" height="2" fill="#ffffff"/><rect x="5" y="9" width="3" height="2" fill="#ffffff"/><rect x="9" y="3" width="3" height="2" fill="#ffffff"/><rect x="9" y="6" width="3" height="2" fill="#ffffff"/><rect x="9" y="9" width="3" height="2" fill="#ffffff"/></g></svg>
<div style="position:absolute;top:428.34px;font-size:12px;line-height:15px;color:#252423;font-weight:400;white-space:nowrap;font-family:'Liberation Sans', sans-serif;left:29.40px;transform:scaleX(0.9568);transform-origin:0 50%;">Transactions</div>
<svg style="position:absolute;left:6px;top:452px;" width="13" height="12" viewBox="0 0 13 12"><g shape-rendering="crispEdges"><rect x="0" y="0" width="13" height="12" fill="#707070"/><rect x="0" y="0" width="13" height="3" fill="#4277bd"/><rect x="1" y="3" width="11" height="8" fill="#b4b4b4"/><rect x="1" y="3" width="3" height="2" fill="#ffffff"/><rect x="1" y="6" width="3" height="2" fill="#ffffff"/><rect x="1" y="9" width="3" height="2" fill="#ffffff"/><rect x="5" y="3" width="3" height="2" fill="#ffffff"/><rect x="5" y="6" width="3" height="2" fill="#ffffff"/><rect x="5" y="9" width="3" height="2" fill="#ffffff"/><rect x="9" y="3" width="3" height="2" fill="#ffffff"/><rect x="9" y="6" width="3" height="2" fill="#ffffff"/><rect x="9" y="9" width="3" height="2" fill="#ffffff"/></g></svg>
<div style="position:absolute;top:452.34px;font-size:12px;line-height:15px;color:#252423;font-weight:400;white-space:nowrap;font-family:'Liberation Sans', sans-serif;left:29.40px;transform:scaleX(0.9650);transform-origin:0 50%;">Report</div>
<svg style="position:absolute;left:6px;top:476px;" width="13" height="12" viewBox="0 0 13 12"><g shape-rendering="crispEdges"><rect x="0" y="0" width="13" height="12" fill="#707070"/><rect x="0" y="0" width="13" height="3" fill="#4277bd"/><rect x="1" y="3" width="11" height="8" fill="#b4b4b4"/><rect x="1" y="3" width="3" height="2" fill="#ffffff"/><rect x="1" y="6" width="3" height="2" fill="#ffffff"/><rect x="1" y="9" width="3" height="2" fill="#ffffff"/><rect x="5" y="3" width="3" height="2" fill="#ffffff"/><rect x="5" y="6" width="3" height="2" fill="#ffffff"/><rect x="5" y="9" width="3" height="2" fill="#ffffff"/><rect x="9" y="3" width="3" height="2" fill="#ffffff"/><rect x="9" y="6" width="3" height="2" fill="#ffffff"/><rect x="9" y="9" width="3" height="2" fill="#ffffff"/></g></svg>
<div style="position:absolute;top:476.34px;font-size:12px;line-height:15px;color:#252423;font-weight:400;white-space:nowrap;font-family:'Liberation Sans', sans-serif;left:29.40px;transform:scaleX(0.9783);transform-origin:0 50%;">CompareTo</div>
<svg style="position:absolute;left:6px;top:500px;" width="13" height="12" viewBox="0 0 13 12"><g shape-rendering="crispEdges"><rect x="0" y="0" width="13" height="12" fill="#707070"/><rect x="0" y="0" width="13" height="3" fill="#4277bd"/><rect x="1" y="3" width="11" height="8" fill="#b4b4b4"/><rect x="1" y="3" width="3" height="2" fill="#ffffff"/><rect x="1" y="6" width="3" height="2" fill="#ffffff"/><rect x="1" y="9" width="3" height="2" fill="#ffffff"/><rect x="5" y="3" width="3" height="2" fill="#ffffff"/><rect x="5" y="6" width="3" height="2" fill="#ffffff"/><rect x="5" y="9" width="3" height="2" fill="#ffffff"/><rect x="9" y="3" width="3" height="2" fill="#ffffff"/><rect x="9" y="6" width="3" height="2" fill="#ffffff"/><rect x="9" y="9" width="3" height="2" fill="#ffffff"/></g></svg>
<div style="position:absolute;top:500.34px;font-size:12px;line-height:15px;color:#252423;font-weight:400;white-space:nowrap;font-family:'Liberation Sans', sans-serif;left:29.40px;transform:scaleX(1.0047);transform-origin:0 50%;">SymbolAllocation</div>
<div style="position:absolute;left:178px;top:152px;width:110px;height:28px;box-sizing:border-box;background:#ffffff;border:1px solid #d2d0ce;"></div>
<svg style="position:absolute;left:190px;top:158px;" width="18" height="16" viewBox="0 0 18 16"><path d="M2 2 L15 14 M15 2 L2 14" stroke="#c8c6c4" stroke-width="2"/></svg>
<svg style="position:absolute;left:228px;top:158px;" width="18" height="16" viewBox="0 0 18 16"><path d="M1.5 8 L6 13 L15.5 2" fill="none" stroke="#c8c6c4" stroke-width="2"/></svg>
<div style="position:absolute;top:154.11px;font-size:17px;line-height:21px;color:#605e5c;font-weight:400;white-space:nowrap;font-family:'Liberation Serif', serif;left:263.60px;transform:scaleX(0.9746);transform-origin:0 50%;font-style:italic;">fx</div>
<div style="position:absolute;left:292px;top:152px;width:266px;height:28px;box-sizing:border-box;background:#ffffff;border:1px solid #d2d0ce;"></div>
<div style="position:absolute;top:159.19px;font-size:11px;line-height:14px;color:#111111;font-weight:400;white-space:nowrap;font-family:'Liberation Mono', monospace;left:301.30px;transform:scaleX(0.9960);transform-origin:0 50%;">= Csv.Document(File.Contents</div>
<div style="position:absolute;left:522px;top:157px;width:14px;height:19px;box-sizing:border-box;background:#c8c6c4;"></div>
<svg style="position:absolute;left:540px;top:160px;" width="13" height="10" viewBox="0 0 13 10"><path d="M1.5 2 L6.5 7 L11.5 2" fill="none" stroke="#505050" stroke-width="1.8"/></svg>
<div style="position:absolute;left:178px;top:210px;width:385px;height:329px;box-sizing:border-box;background:#ffffff;"></div>
<div style="position:absolute;left:178px;top:184px;width:30px;height:26px;box-sizing:border-box;background:#f3f2f1;border:1px solid #d2d0ce;"></div>
<div style="position:absolute;left:178px;top:205px;width:30px;height:1px;box-sizing:border-box;background:#d2d0ce;"></div>
<svg style="position:absolute;left:184px;top:189px;" width="13" height="12" viewBox="0 0 13 12"><g shape-rendering="crispEdges"><rect x="0" y="0" width="13" height="12" fill="#707070"/><rect x="0" y="0" width="13" height="3" fill="#4277bd"/><rect x="1" y="3" width="11" height="8" fill="#b4b4b4"/><rect x="1" y="3" width="3" height="2" fill="#ffffff"/><rect x="1" y="6" width="3" height="2" fill="#ffffff"/><rect x="1" y="9" width="3" height="2" fill="#ffffff"/><rect x="5" y="3" width="3" height="2" fill="#ffffff"/><rect x="5" y="6" width="3" height="2" fill="#ffffff"/><rect x="5" y="9" width="3" height="2" fill="#ffffff"/><rect x="9" y="3" width="3" height="2" fill="#ffffff"/><rect x="9" y="6" width="3" height="2" fill="#ffffff"/><rect x="9" y="9" width="3" height="2" fill="#ffffff"/></g></svg>
<svg style="position:absolute;left:198px;top:197px;" width="6" height="4" viewBox="0 0 6 4"><path d="M0 0 H5 L2.5 3 Z" fill="#555"/></svg>
<div style="position:absolute;left:208px;top:185px;width:159px;height:20px;box-sizing:border-box;background:#14735f;"></div>
<div style="position:absolute;top:189.19px;font-size:11px;line-height:14px;color:#ffffff;font-weight:700;white-space:nowrap;font-family:'Liberation Sans', sans-serif;left:210.20px;transform:scaleX(0.8500);transform-origin:0 50%;">A</div>
<div style="position:absolute;top:184.86px;font-size:10.5px;line-height:13px;color:#ffffff;font-weight:700;white-space:nowrap;font-family:'Liberation Sans', sans-serif;left:217.00px;transform:scaleX(0.6250);transform-origin:0 50%;">B</div>
<div style="position:absolute;top:192.86px;font-size:10.5px;line-height:13px;color:#ffffff;font-weight:700;white-space:nowrap;font-family:'Liberation Sans', sans-serif;left:220.40px;transform:scaleX(0.7250);transform-origin:0 50%;">C</div>
<div style="position:absolute;top:188.02px;font-size:11.5px;line-height:14px;color:#ffffff;font-weight:700;white-space:nowrap;font-family:'Liberation Sans', sans-serif;left:232.30px;transform:scaleX(0.8655);transform-origin:0 50%;">Column1</div>
<div style="position:absolute;left:349px;top:187px;width:16px;height:16px;box-sizing:border-box;background:#ffffff;border:1px solid #c8c6c4;"></div>
<svg style="position:absolute;left:353px;top:193px;" width="8" height="4" viewBox="0 0 8 4"><path d="M0 0 H7 L3.5 3.5 Z" fill="#555"/></svg>
<div style="position:absolute;left:367px;top:185px;width:161px;height:20px;box-sizing:border-box;background:#f3f2f1;"></div>
<div style="position:absolute;top:189.02px;font-size:11.5px;line-height:14px;color:#605e5c;font-weight:400;white-space:nowrap;font-family:'Liberation Sans', sans-serif;left:370.30px;transform:scaleX(0.8500);transform-origin:0 50%;">A</div>
<div style="position:absolute;top:184.19px;font-size:11px;line-height:14px;color:#605e5c;font-weight:400;white-space:nowrap;font-family:'Liberation Sans', sans-serif;left:377.10px;transform:scaleX(0.7571);transform-origin:0 50%;">B</div>
<div style="position:absolute;top:192.19px;font-size:11px;line-height:14px;color:#605e5c;font-weight:400;white-space:nowrap;font-family:'Liberation Sans', sans-serif;left:380.00px;transform:scaleX(0.7625);transform-origin:0 50%;">C</div>
<div style="position:absolute;top:188.02px;font-size:11.5px;line-height:14px;color:#605e5c;font-weight:700;white-space:nowrap;font-family:'Liberation Sans', sans-serif;left:391.50px;transform:scaleX(0.8832);transform-origin:0 50%;">Column2</div>
<div style="position:absolute;left:509px;top:187px;width:16px;height:16px;box-sizing:border-box;background:#ffffff;border:1px solid #8a8886;"></div>
<svg style="position:absolute;left:513px;top:193px;" width="8" height="4" viewBox="0 0 8 4"><path d="M0 0 H7 L3.5 3.5 Z" fill="#555"/></svg>
<div style="position:absolute;left:528px;top:185px;width:35px;height:20px;box-sizing:border-box;background:#f3f2f1;"></div>
<div style="position:absolute;top:189.02px;font-size:11.5px;line-height:14px;color:#605e5c;font-weight:400;white-space:nowrap;font-family:'Liberation Sans', sans-serif;left:530.50px;transform:scaleX(0.8500);transform-origin:0 50%;">A</div>
<div style="position:absolute;top:184.19px;font-size:11px;line-height:14px;color:#605e5c;font-weight:400;white-space:nowrap;font-family:'Liberation Sans', sans-serif;left:537.30px;transform:scaleX(0.7571);transform-origin:0 50%;">B</div>
<div style="position:absolute;top:192.19px;font-size:11px;line-height:14px;color:#605e5c;font-weight:400;white-space:nowrap;font-family:'Liberation Sans', sans-serif;left:540.20px;transform:scaleX(0.7625);transform-origin:0 50%;">C</div>
<div style="position:absolute;top:188.02px;font-size:11.5px;line-height:14px;color:#605e5c;font-weight:700;white-space:nowrap;font-family:'Liberation Sans', sans-serif;left:552px;">C</div>
<div style="position:absolute;left:208px;top:205px;width:350px;height:1px;box-sizing:border-box;background:#e8e8e8;"></div>
<div style="position:absolute;left:208px;top:206px;width:350px;height:4px;box-sizing:border-box;background:#00b6a7;"></div>
<div style="position:absolute;left:367px;top:185px;width:1px;height:25px;box-sizing:border-box;background:#f3f2f1;"></div>
<div style="position:absolute;left:178px;top:210px;width:30px;height:329px;box-sizing:border-box;background:#f3f2f1;"></div>
<div style="position:absolute;left:208px;top:210px;width:159px;height:329px;box-sizing:border-box;background:#e6e6e6;"></div>
<div style="position:absolute;left:178px;top:230px;width:385px;height:1px;box-sizing:border-box;background:#dcdcdc;"></div>
<div style="position:absolute;top:213.34px;font-size:12px;line-height:15px;color:#605e5c;font-weight:400;white-space:nowrap;font-family:'Liberation Sans', sans-serif;left:178.00px;width:30px;text-align:center;">1</div>
<div style="position:absolute;top:213.02px;font-size:11.5px;line-height:14px;color:#252423;font-weight:400;white-space:nowrap;font-family:'Liberation Sans', sans-serif;left:211.30px;transform:scaleX(0.9396);transform-origin:0 50%;">Account</div>
<div style="position:absolute;top:213.02px;font-size:11.5px;line-height:14px;color:#252423;font-weight:400;white-space:nowrap;font-family:'Liberation Sans', sans-serif;left:371.40px;transform:scaleX(0.9954);transform-origin:0 50%;">Portfolio</div>
<div style="position:absolute;top:213.02px;font-size:11.5px;line-height:14px;color:#252423;font-weight:400;white-space:nowrap;font-family:'Liberation Sans', sans-serif;letter-spacing:-0.3px;left:531px;">Ta</div>
<div style="position:absolute;left:178px;top:251px;width:385px;height:1px;box-sizing:border-box;background:#dcdcdc;"></div>
<div style="position:absolute;top:234.34px;font-size:12px;line-height:15px;color:#605e5c;font-weight:400;white-space:nowrap;font-family:'Liberation Sans', sans-serif;left:178.00px;width:30px;text-align:center;">2</div>
<div style="position:absolute;top:234.02px;font-size:11.5px;line-height:14px;color:#252423;font-weight:400;white-space:nowrap;font-family:'Liberation Sans', sans-serif;left:211.30px;transform:scaleX(0.8040);transform-origin:0 50%;">D-GRRSP</div>
<div style="position:absolute;top:234.02px;font-size:11.5px;line-height:14px;color:#252423;font-weight:400;white-space:nowrap;font-family:'Liberation Sans', sans-serif;left:371.40px;transform:scaleX(0.8734);transform-origin:0 50%;">Di</div>
<div style="position:absolute;top:234.02px;font-size:11.5px;line-height:14px;color:#252423;font-weight:400;white-space:nowrap;font-family:'Liberation Sans', sans-serif;letter-spacing:-0.3px;left:531px;">RF</div>
<div style="position:absolute;left:178px;top:272px;width:385px;height:1px;box-sizing:border-box;background:#dcdcdc;"></div>
<div style="position:absolute;top:255.34px;font-size:12px;line-height:15px;color:#605e5c;font-weight:400;white-space:nowrap;font-family:'Liberation Sans', sans-serif;left:178.00px;width:30px;text-align:center;">3</div>
<div style="position:absolute;top:255.02px;font-size:11.5px;line-height:14px;color:#252423;font-weight:400;white-space:nowrap;font-family:'Liberation Sans', sans-serif;left:211.30px;transform:scaleX(0.7970);transform-origin:0 50%;">D-RRSP</div>
<div style="position:absolute;top:255.02px;font-size:11.5px;line-height:14px;color:#252423;font-weight:400;white-space:nowrap;font-family:'Liberation Sans', sans-serif;left:371.40px;transform:scaleX(0.8734);transform-origin:0 50%;">Di</div>
<div style="position:absolute;top:255.02px;font-size:11.5px;line-height:14px;color:#252423;font-weight:400;white-space:nowrap;font-family:'Liberation Sans', sans-serif;letter-spacing:-0.3px;left:531px;">RF</div>
<div style="position:absolute;left:178px;top:293px;width:385px;height:1px;box-sizing:border-box;background:#dcdcdc;"></div>
<div style="position:absolute;top:276.34px;font-size:12px;line-height:15px;color:#605e5c;font-weight:400;white-space:nowrap;font-family:'Liberation Sans', sans-serif;left:178.00px;width:30px;text-align:center;">4</div>
<div style="position:absolute;top:276.02px;font-size:11.5px;line-height:14px;color:#252423;font-weight:400;white-space:nowrap;font-family:'Liberation Sans', sans-serif;left:211.30px;transform:scaleX(0.8263);transform-origin:0 50%;">D-RRSP-USD</div>
<div style="position:absolute;top:276.02px;font-size:11.5px;line-height:14px;color:#252423;font-weight:400;white-space:nowrap;font-family:'Liberation Sans', sans-serif;left:371.40px;transform:scaleX(0.8734);transform-origin:0 50%;">Di</div>
<div style="position:absolute;top:276.02px;font-size:11.5px;line-height:14px;color:#252423;font-weight:400;white-space:nowrap;font-family:'Liberation Sans', sans-serif;letter-spacing:-0.3px;left:531px;">RF</div>
<div style="position:absolute;left:178px;top:314px;width:385px;height:1px;box-sizing:border-box;background:#dcdcdc;"></div>
<div style="position:absolute;top:297.34px;font-size:12px;line-height:15px;color:#605e5c;font-weight:400;white-space:nowrap;font-family:'Liberation Sans', sans-serif;left:178.00px;width:30px;text-align:center;">5</div>
<div style="position:absolute;top:297.02px;font-size:11.5px;line-height:14px;color:#252423;font-weight:400;white-space:nowrap;font-family:'Liberation Sans', sans-serif;left:211.30px;transform:scaleX(0.8052);transform-origin:0 50%;">D-TFSA</div>
<div style="position:absolute;top:297.02px;font-size:11.5px;line-height:14px;color:#252423;font-weight:400;white-space:nowrap;font-family:'Liberation Sans', sans-serif;left:371.40px;transform:scaleX(0.8734);transform-origin:0 50%;">Di</div>
<div style="position:absolute;top:297.02px;font-size:11.5px;line-height:14px;color:#252423;font-weight:400;white-space:nowrap;font-family:'Liberation Sans', sans-serif;letter-spacing:-0.3px;left:531px;">TF</div>
<div style="position:absolute;left:178px;top:335px;width:385px;height:1px;box-sizing:border-box;background:#dcdcdc;"></div>
<div style="position:absolute;top:318.34px;font-size:12px;line-height:15px;color:#605e5c;font-weight:400;white-space:nowrap;font-family:'Liberation Sans', sans-serif;left:178.00px;width:30px;text-align:center;">6</div>
<div style="position:absolute;top:318.02px;font-size:11.5px;line-height:14px;color:#252423;font-weight:400;white-space:nowrap;font-family:'Liberation Sans', sans-serif;left:211.30px;transform:scaleX(0.8380);transform-origin:0 50%;">D-TFSA-USD</div>
<div style="position:absolute;top:318.02px;font-size:11.5px;line-height:14px;color:#252423;font-weight:400;white-space:nowrap;font-family:'Liberation Sans', sans-serif;left:371.40px;transform:scaleX(0.8734);transform-origin:0 50%;">Di</div>
<div style="position:absolute;top:318.02px;font-size:11.5px;line-height:14px;color:#252423;font-weight:400;white-space:nowrap;font-family:'Liberation Sans', sans-serif;letter-spacing:-0.3px;left:531px;">TF</div>
<div style="position:absolute;left:178px;top:356px;width:385px;height:1px;box-sizing:border-box;background:#dcdcdc;"></div>
<div style="position:absolute;top:339.34px;font-size:12px;line-height:15px;color:#605e5c;font-weight:400;white-space:nowrap;font-family:'Liberation Sans', sans-serif;left:178.00px;width:30px;text-align:center;">7</div>
<div style="position:absolute;top:339.02px;font-size:11.5px;line-height:14px;color:#252423;font-weight:400;white-space:nowrap;font-family:'Liberation Sans', sans-serif;left:211.30px;transform:scaleX(0.9122);transform-origin:0 50%;">Joint-CDN</div>
<div style="position:absolute;top:339.02px;font-size:11.5px;line-height:14px;color:#252423;font-weight:400;white-space:nowrap;font-family:'Liberation Sans', sans-serif;left:371.40px;transform:scaleX(0.9201);transform-origin:0 50%;">Joint-TD</div>
<div style="position:absolute;top:339.02px;font-size:11.5px;line-height:14px;color:#252423;font-weight:400;white-space:nowrap;font-family:'Liberation Sans', sans-serif;letter-spacing:-0.3px;left:531px;">Ca</div>
<div style="position:absolute;left:178px;top:377px;width:385px;height:1px;box-sizing:border-box;background:#dcdcdc;"></div>
<div style="position:absolute;top:360.34px;font-size:12px;line-height:15px;color:#605e5c;font-weight:400;white-space:nowrap;font-family:'Liberation Sans', sans-serif;left:178.00px;width:30px;text-align:center;">8</div>
<div style="position:absolute;top:360.02px;font-size:11.5px;line-height:14px;color:#252423;font-weight:400;white-space:nowrap;font-family:'Liberation Sans', sans-serif;left:211.30px;transform:scaleX(0.8959);transform-origin:0 50%;">Joint-US</div>
<div style="position:absolute;top:360.02px;font-size:11.5px;line-height:14px;color:#252423;font-weight:400;white-space:nowrap;font-family:'Liberation Sans', sans-serif;left:371.40px;transform:scaleX(0.9201);transform-origin:0 50%;">Joint-TD</div>
<div style="position:absolute;top:360.02px;font-size:11.5px;line-height:14px;color:#252423;font-weight:400;white-space:nowrap;font-family:'Liberation Sans', sans-serif;letter-spacing:-0.3px;left:531px;">Ca</div>
<div style="position:absolute;left:178px;top:398px;width:385px;height:1px;box-sizing:border-box;background:#dcdcdc;"></div>
<div style="position:absolute;top:381.34px;font-size:12px;line-height:15px;color:#605e5c;font-weight:400;white-space:nowrap;font-family:'Liberation Sans', sans-serif;left:178.00px;width:30px;text-align:center;">9</div>
<div style="position:absolute;top:381.02px;font-size:11.5px;line-height:14px;color:#252423;font-weight:400;white-space:nowrap;font-family:'Liberation Sans', sans-serif;left:211.30px;transform:scaleX(0.8957);transform-origin:0 50%;">Scotia-CDN</div>
<div style="position:absolute;top:381.02px;font-size:11.5px;line-height:14px;color:#252423;font-weight:400;white-space:nowrap;font-family:'Liberation Sans', sans-serif;left:371.40px;transform:scaleX(0.8860);transform-origin:0 50%;">Joint-SC</div>
<div style="position:absolute;top:381.02px;font-size:11.5px;line-height:14px;color:#252423;font-weight:400;white-space:nowrap;font-family:'Liberation Sans', sans-serif;letter-spacing:-0.3px;left:531px;">Ca</div>
<div style="position:absolute;left:178px;top:419px;width:385px;height:1px;box-sizing:border-box;background:#dcdcdc;"></div>
<div style="position:absolute;top:402.34px;font-size:12px;line-height:15px;color:#605e5c;font-weight:400;white-space:nowrap;font-family:'Liberation Sans', sans-serif;left:178.00px;width:30px;text-align:center;">10</div>
<div style="position:absolute;top:402.02px;font-size:11.5px;line-height:14px;color:#252423;font-weight:400;white-space:nowrap;font-family:'Liberation Sans', sans-serif;left:211.30px;transform:scaleX(0.8849);transform-origin:0 50%;">Scotia-US</div>
<div style="position:absolute;top:402.02px;font-size:11.5px;line-height:14px;color:#252423;font-weight:400;white-space:nowrap;font-family:'Liberation Sans', sans-serif;left:371.40px;transform:scaleX(0.8860);transform-origin:0 50%;">Joint-SC</div>
<div style="position:absolute;top:402.02px;font-size:11.5px;line-height:14px;color:#252423;font-weight:400;white-space:nowrap;font-family:'Liberation Sans', sans-serif;letter-spacing:-0.3px;left:531px;">Ca</div>
<div style="position:absolute;left:178px;top:440px;width:385px;height:1px;box-sizing:border-box;background:#dcdcdc;"></div>
<div style="position:absolute;top:423.34px;font-size:12px;line-height:15px;color:#605e5c;font-weight:400;white-space:nowrap;font-family:'Liberation Sans', sans-serif;left:178.00px;width:30px;text-align:center;">11</div>
<div style="position:absolute;top:423.02px;font-size:11.5px;line-height:14px;color:#252423;font-weight:400;white-space:nowrap;font-family:'Liberation Sans', sans-serif;left:211.30px;transform:scaleX(0.8089);transform-origin:0 50%;">V-RRSP</div>
<div style="position:absolute;top:423.02px;font-size:11.5px;line-height:14px;color:#252423;font-weight:400;white-space:nowrap;font-family:'Liberation Sans', sans-serif;left:371.40px;transform:scaleX(0.9088);transform-origin:0 50%;">Vi</div>
<div style="position:absolute;top:423.02px;font-size:11.5px;line-height:14px;color:#252423;font-weight:400;white-space:nowrap;font-family:'Liberation Sans', sans-serif;letter-spacing:-0.3px;left:531px;">RF</div>
<div style="position:absolute;left:178px;top:461px;width:385px;height:1px;box-sizing:border-box;background:#dcdcdc;"></div>
<div style="position:absolute;top:444.34px;font-size:12px;line-height:15px;color:#605e5c;font-weight:400;white-space:nowrap;font-family:'Liberation Sans', sans-serif;left:178.00px;width:30px;text-align:center;">12</div>
<div style="position:absolute;top:444.02px;font-size:11.5px;line-height:14px;color:#252423;font-weight:400;white-space:nowrap;font-family:'Liberation Sans', sans-serif;left:211.30px;transform:scaleX(0.8312);transform-origin:0 50%;">V-RRSP-USD</div>
<div style="position:absolute;top:444.02px;font-size:11.5px;line-height:14px;color:#252423;font-weight:400;white-space:nowrap;font-family:'Liberation Sans', sans-serif;left:371.40px;transform:scaleX(0.9088);transform-origin:0 50%;">Vi</div>
<div style="position:absolute;top:444.02px;font-size:11.5px;line-height:14px;color:#252423;font-weight:400;white-space:nowrap;font-family:'Liberation Sans', sans-serif;letter-spacing:-0.3px;left:531px;">RF</div>
<div style="position:absolute;left:178px;top:482px;width:385px;height:1px;box-sizing:border-box;background:#dcdcdc;"></div>
<div style="position:absolute;top:465.34px;font-size:12px;line-height:15px;color:#605e5c;font-weight:400;white-space:nowrap;font-family:'Liberation Sans', sans-serif;left:178.00px;width:30px;text-align:center;">13</div>
<div style="position:absolute;top:465.02px;font-size:11.5px;line-height:14px;color:#252423;font-weight:400;white-space:nowrap;font-family:'Liberation Sans', sans-serif;left:211.30px;transform:scaleX(0.8254);transform-origin:0 50%;">V-TFSA</div>
<div style="position:absolute;top:465.02px;font-size:11.5px;line-height:14px;color:#252423;font-weight:400;white-space:nowrap;font-family:'Liberation Sans', sans-serif;left:371.40px;transform:scaleX(0.9088);transform-origin:0 50%;">Vi</div>
<div style="position:absolute;top:465.02px;font-size:11.5px;line-height:14px;color:#252423;font-weight:400;white-space:nowrap;font-family:'Liberation Sans', sans-serif;letter-spacing:-0.3px;left:531px;">TF</div>
<div style="position:absolute;left:178px;top:503px;width:385px;height:1px;box-sizing:border-box;background:#dcdcdc;"></div>
<div style="position:absolute;top:486.34px;font-size:12px;line-height:15px;color:#605e5c;font-weight:400;white-space:nowrap;font-family:'Liberation Sans', sans-serif;left:178.00px;width:30px;text-align:center;">14</div>
<div style="position:absolute;top:486.02px;font-size:11.5px;line-height:14px;color:#252423;font-weight:400;white-space:nowrap;font-family:'Liberation Sans', sans-serif;left:211.30px;transform:scaleX(0.8492);transform-origin:0 50%;">V-TFSA-USD</div>
<div style="position:absolute;top:486.02px;font-size:11.5px;line-height:14px;color:#252423;font-weight:400;white-space:nowrap;font-family:'Liberation Sans', sans-serif;left:371.40px;transform:scaleX(0.9088);transform-origin:0 50%;">Vi</div>
<div style="position:absolute;top:486.02px;font-size:11.5px;line-height:14px;color:#252423;font-weight:400;white-space:nowrap;font-family:'Liberation Sans', sans-serif;letter-spacing:-0.3px;left:531px;">TF</div>
<div style="position:absolute;left:178px;top:524px;width:385px;height:1px;box-sizing:border-box;background:#dcdcdc;"></div>
<div style="position:absolute;top:507.34px;font-size:12px;line-height:15px;color:#605e5c;font-weight:400;white-space:nowrap;font-family:'Liberation Sans', sans-serif;left:178.00px;width:30px;text-align:center;">15</div>
<div style="position:absolute;top:507.02px;font-size:11.5px;line-height:14px;color:#252423;font-weight:400;white-space:nowrap;font-family:'Liberation Sans', sans-serif;left:211.30px;transform:scaleX(0.7785);transform-origin:0 50%;">VS</div>
<div style="position:absolute;top:507.02px;font-size:11.5px;line-height:14px;color:#252423;font-weight:400;white-space:nowrap;font-family:'Liberation Sans', sans-serif;left:371.40px;transform:scaleX(0.7785);transform-origin:0 50%;">VS</div>
<div style="position:absolute;top:507.02px;font-size:11.5px;line-height:14px;color:#252423;font-weight:400;white-space:nowrap;font-family:'Liberation Sans', sans-serif;letter-spacing:-0.3px;left:531px;">Co</div>
<div style="position:absolute;left:178px;top:545px;width:385px;height:1px;box-sizing:border-box;background:#dcdcdc;"></div>
<div style="position:absolute;top:528.34px;font-size:12px;line-height:15px;color:#605e5c;font-weight:400;white-space:nowrap;font-family:'Liberation Sans', sans-serif;left:178.00px;width:30px;text-align:center;">16</div>
<div style="position:absolute;top:528.02px;font-size:11.5px;line-height:14px;color:#252423;font-weight:400;white-space:nowrap;font-family:'Liberation Sans', sans-serif;letter-spacing:-0.3px;left:531px;"></div>
<div style="position:absolute;left:178px;top:184px;width:1px;height:355px;box-sizing:border-box;background:#d2d0ce;"></div>
<div style="position:absolute;left:207px;top:184px;width:1px;height:355px;box-sizing:border-box;background:#d2d0ce;"></div>
<div style="position:absolute;left:367px;top:210px;width:1px;height:329px;box-sizing:border-box;background:#dcdcdc;"></div>
<div style="position:absolute;left:527px;top:185px;width:1px;height:354px;box-sizing:border-box;background:#dcdcdc;"></div>
<div style="position:absolute;left:541px;top:210px;width:17px;height:329px;box-sizing:border-box;background:#f0f0f0;"></div>
<div style="position:absolute;left:541px;top:244px;width:16px;height:213px;box-sizing:border-box;background:#c8c8c8;"></div>
<svg style="position:absolute;left:543px;top:227px;" width="13" height="9" viewBox="0 0 13 9"><path d="M1.5 7.5 L6.5 2.5 L11.5 7.5" fill="none" stroke="#555" stroke-width="2.6"/></svg>
<svg style="position:absolute;left:543px;top:496px;" width="13" height="9" viewBox="0 0 13 9"><path d="M1.5 1.5 L6.5 6.5 L11.5 1.5" fill="none" stroke="#555" stroke-width="2.6"/></svg>
<div style="position:absolute;left:558px;top:184px;width:4px;height:355px;box-sizing:border-box;background:#f3f2f1;"></div>
<div style="position:absolute;left:208px;top:522px;width:333px;height:17px;box-sizing:border-box;background:#f0f0f0;"></div>
<div style="position:absolute;left:242px;top:523px;width:67px;height:14px;box-sizing:border-box;background:#c8c8c8;"></div>
<svg style="position:absolute;left:224px;top:524px;" width="11" height="13" viewBox="0 0 11 13"><path d="M8.5 1.5 L3 6.5 L8.5 11.5" fill="none" stroke="#555" stroke-width="2.6"/></svg>
<svg style="position:absolute;left:514px;top:522px;" width="11" height="13" viewBox="0 0 11 13"><path d="M2.5 1.5 L8 6.5 L2.5 11.5" fill="none" stroke="#555" stroke-width="2.6"/></svg>
<div style="position:absolute;top:151.82px;font-size:13.5px;line-height:17px;color:#5c5a58;font-weight:400;white-space:nowrap;font-family:'Liberation Sans', sans-serif;left:574.50px;transform:scaleX(0.9515);transform-origin:0 50%;">Query Settings</div>
<svg style="position:absolute;left:789px;top:153px;" width="14" height="14" viewBox="0 0 14 14"><path d="M1.5 1.5 L12 12 M12 1.5 L1.5 12" stroke="#605e5c" stroke-width="1.3"/></svg>
<svg style="position:absolute;left:572px;top:188px;" width="9" height="9" viewBox="0 0 9 9"><path d="M7 1 V7 H1 Z" fill="#454545"/></svg>
<div style="position:absolute;top:184.67px;font-size:12.5px;line-height:16px;color:#252423;font-weight:700;white-space:nowrap;font-family:'Liberation Sans', sans-serif;left:586.50px;transform:scaleX(0.8600);transform-origin:0 50%;">PROPERTIES</div>
<div style="position:absolute;top:205.84px;font-size:12px;line-height:15px;color:#252423;font-weight:400;white-space:nowrap;font-family:'Liberation Sans', sans-serif;left:586.50px;transform:scaleX(0.9432);transform-origin:0 50%;">Name</div>
<div style="position:absolute;left:586px;top:222px;width:218px;height:22px;box-sizing:border-box;background:#ffffff;border:1px solid #c8c6c4;"></div>
<div style="position:absolute;top:227.34px;font-size:12px;line-height:15px;color:#252423;font-weight:400;white-space:nowrap;font-family:'Liberation Sans', sans-serif;left:593.00px;transform:scaleX(0.9086);transform-origin:0 50%;">Account</div>
<div style="position:absolute;top:252.84px;font-size:12px;line-height:15px;color:#17695e;font-weight:400;white-space:nowrap;font-family:'Liberation Sans', sans-serif;left:586.50px;transform:scaleX(0.9739);transform-origin:0 50%;">All Properties</div>
<svg style="position:absolute;left:572px;top:288px;" width="9" height="9" viewBox="0 0 9 9"><path d="M7 1 V7 H1 Z" fill="#454545"/></svg>
<div style="position:absolute;top:285.67px;font-size:12.5px;line-height:16px;color:#252423;font-weight:700;white-space:nowrap;font-family:'Liberation Sans', sans-serif;left:586.50px;transform:scaleX(0.8597);transform-origin:0 50%;">APPLIED STEPS</div>
<div style="position:absolute;left:586px;top:307px;width:218px;height:206px;box-sizing:border-box;border:1px solid #c8c6c4;"></div>
<div style="position:absolute;left:587px;top:308px;width:212px;height:20px;box-sizing:border-box;background:#d2d0ce;"></div>
<div style="position:absolute;left:587px;top:308px;width:2px;height:20px;box-sizing:border-box;background:#137260;"></div>
<div style="position:absolute;top:312.34px;font-size:12px;line-height:15px;color:#252423;font-weight:400;white-space:nowrap;font-family:'Liberation Sans', sans-serif;left:609.00px;transform:scaleX(0.9240);transform-origin:0 50%;">Source1</div>
<svg style="position:absolute;left:783px;top:312px;" width="13" height="13" viewBox="0 0 13 13"><g transform="translate(6.5,6.5)"><g fill="#b0b0b0"><circle r="3.1" fill="none" stroke="#b0b0b0" stroke-width="1.7"/><rect x="-1.2" y="-5.6" width="2.4" height="2.6" transform="rotate(30)"/><rect x="-1.2" y="-5.6" width="2.4" height="2.6" transform="rotate(90)"/><rect x="-1.2" y="-5.6" width="2.4" height="2.6" transform="rotate(150)"/><rect x="-1.2" y="-5.6" width="2.4" height="2.6" transform="rotate(210)"/><rect x="-1.2" y="-5.6" width="2.4" height="2.6" transform="rotate(270)"/><rect x="-1.2" y="-5.6" width="2.4" height="2.6" transform="rotate(330)"/></g></g></svg>
<div style="position:absolute;top:332.34px;font-size:12px;line-height:15px;color:#252423;font-weight:400;white-space:nowrap;font-family:'Liberation Sans', sans-serif;left:609.40px;transform:scaleX(0.9810);transform-origin:0 50%;">Promoted Headers</div>
<svg style="position:absolute;left:783px;top:332px;" width="13" height="13" viewBox="0 0 13 13"><g transform="translate(6.5,6.5)"><g fill="#b0b0b0"><circle r="3.1" fill="none" stroke="#b0b0b0" stroke-width="1.7"/><rect x="-1.2" y="-5.6" width="2.4" height="2.6" transform="rotate(30)"/><rect x="-1.2" y="-5.6" width="2.4" height="2.6" transform="rotate(90)"/><rect x="-1.2" y="-5.6" width="2.4" height="2.6" transform="rotate(150)"/><rect x="-1.2" y="-5.6" width="2.4" height="2.6" transform="rotate(210)"/><rect x="-1.2" y="-5.6" width="2.4" height="2.6" transform="rotate(270)"/><rect x="-1.2" y="-5.6" width="2.4" height="2.6" transform="rotate(330)"/></g></g></svg>
<div style="position:absolute;top:352.34px;font-size:12px;line-height:15px;color:#252423;font-weight:400;white-space:nowrap;font-family:'Liberation Sans', sans-serif;left:609.40px;transform:scaleX(0.9645);transform-origin:0 50%;">Changed Type</div>
<div style="position:absolute;left:173px;top:142px;width:1px;height:396px;box-sizing:border-box;background:#d2d0ce;"></div>
<div style="position:absolute;left:562px;top:142px;width:1px;height:396px;box-sizing:border-box;background:#d2d0ce;"></div>
<svg style="position:absolute;left:0px;top:0px;pointer-events:none;" width="826" height="542" viewBox="0 0 826 542"><path d="M24.5 144.6 L122.5 144.6 L126 146.5 L129.2 149.8 L132.8 154.5 L135.8 160.1 L138.3 167 L140.3 174.9 L142.5 189.7 L143.7 204.4 L144 217.7 L143.5 430 L143.3 468.8 L142.6 470 L141 488.1 L138.1 503.6 L133.3 515.3 L129 520.5 L124.5 525 L122.6 527.2 L23.5 527.2 L20.4 523.7 L17.5 520 L14.9 515.9 L12.3 510.5 L10.2 504.9 L7 489.2 L4.5 476.7 L4.7 450 L4.1 207 L4.5 191.6 L6.5 178.7 L9.7 165.8 L13.5 155.5 L18 147.7 L21 145.5 Z" fill="none" stroke="#e81123" stroke-width="2.9" stroke-linejoin="round"/><rect x="778.5" y="301.5" width="22.2" height="28.6" rx="3.8" fill="none" stroke="#e81123" stroke-width="2.8"/></svg></body></html>
